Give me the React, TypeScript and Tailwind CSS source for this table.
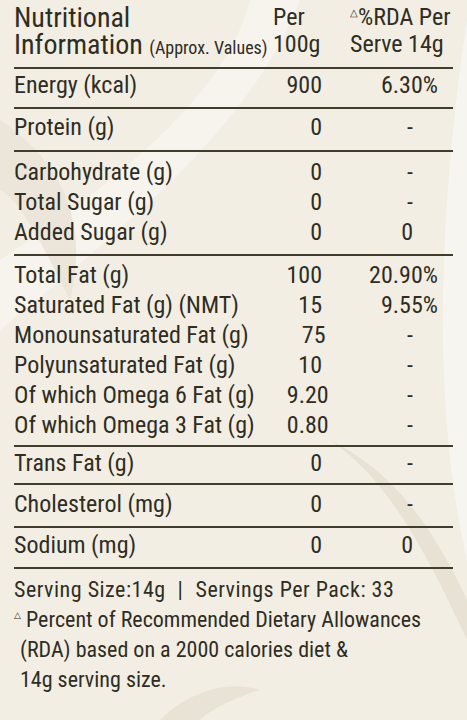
import React from "react";

type Row = { name: string; per: string; rda: string };

const fatRows: Row[] = [
  { name: "Total Fat (g)", per: "100", rda: "20.90%" },
  { name: "Saturated Fat (g) (NMT)", per: "15", rda: "9.55%" },
  { name: "Monounsaturated Fat (g)", per: "75", rda: "-" },
  { name: "Polyunsaturated Fat (g)", per: "10", rda: "-" },
  { name: "Of which Omega 6 Fat (g)", per: "9.20", rda: "-" },
  { name: "Of which Omega 3 Fat (g)", per: "0.80", rda: "-" },
];

const carbRows: Row[] = [
  { name: "Carbohydrate (g)", per: "0", rda: "-" },
  { name: "Total Sugar (g)", per: "0", rda: "-" },
  { name: "Added Sugar (g)", per: "0", rda: "0" },
];

// percentages sit flush right, dashes and zeros sit a bit further in
const Line = ({ row }: { row: Row }) => {
  const isPct = row.rda.includes("%");
  return (
    <div className="flex items-center h-[30px] pr-[15px] whitespace-nowrap">
      <span className="flex-1">{row.name}</span>
      <span className="w-[80px] text-right">{row.per}</span>
      <span className={`w-[116px] text-right ${isPct ? "" : "pr-[25px]"}`}>{row.rda}</span>
    </div>
  );
};

const Rule = () => <div className="h-[2px] bg-[#403d2c]" />;

const App = () => {
  return (
    <main className="relative w-[467px] h-[720px] overflow-hidden bg-[#f2eee4] text-[#2f2d22] text-[24px] leading-[30px] font-['Roboto_Condensed',sans-serif] font-normal">
      {/* soft leaf shapes behind the label */}
      <svg className="absolute inset-0" width="467" height="720" viewBox="0 0 467 720">
        <path d="M250 0 C230 80 150 160 0 260 L0 330 C120 230 250 130 300 0 Z" fill="#f7f4ed" />
        <path d="M0 120 C60 160 90 220 70 300 C40 240 20 200 0 190 Z" fill="#ece6da" />
        <path d="M467 20 C440 200 430 400 467 560 Z" fill="#f7f5ef" />
        <path d="M330 440 C390 480 430 560 467 640 L467 600 C430 520 390 470 330 440 Z" fill="#e8e2d5" />
        <path d="M160 720 C190 690 230 680 260 690 C230 700 210 710 200 720 Z" fill="#e9e3d6" />
      </svg>

      <div className="relative px-[14px]">
        <div className="flex h-[67px] pt-[4px] pr-[15px] leading-[27px] whitespace-nowrap">
          <div className="flex-1 min-w-0 text-[28px]">
            <div>Nutritional</div>
            <div>
              Information <span className="text-[18px]">(Approx. Values)</span>
            </div>
          </div>
          <div className="w-[80px] pl-[31px]">
            <div>Per</div>
            <div>100g</div>
          </div>
          <div className="w-[116px] pl-[28px]">
            <div>
              <span className="text-[10px] align-top leading-[18px]">△</span>%RDA Per
            </div>
            <div>Serve 14g</div>
          </div>
        </div>
        <Rule />
        <div className="pt-[1px] pb-[7px]">
          <Line row={{ name: "Energy (kcal)", per: "900", rda: "6.30%" }} />
        </div>
        <Rule />
        <div className="pt-[3px] pb-[8px]">
          <Line row={{ name: "Protein (g)", per: "0", rda: "-" }} />
        </div>
        <Rule />
        <div className="pt-[5px] pb-[7px]">
          {carbRows.map((r) => (
            <Line key={r.name} row={r} />
          ))}
        </div>
        <Rule />
        <div className="pt-[4px] pb-[5px]">
          {fatRows.map((r) => (
            <Line key={r.name} row={r} />
          ))}
        </div>
        <Rule />
        <div className="pt-[1px] pb-[5px]">
          <Line row={{ name: "Trans Fat (g)", per: "0", rda: "-" }} />
        </div>
        <Rule />
        <div className="pt-[4px] pb-[7px]">
          <Line row={{ name: "Cholesterol (mg)", per: "0", rda: "-" }} />
        </div>
        <Rule />
        <div className="pt-[2px] pb-[7px]">
          <Line row={{ name: "Sodium (mg)", per: "0", rda: "0" }} />
        </div>
        <Rule />
        <div className="pt-[6px] text-[22px] leading-[30px] whitespace-nowrap">
          <div className="tracking-[0.5px]">
            Serving Size:14g<span className="mx-[12px]">|</span>Servings Per Pack: 33
          </div>
          <div>
            <span className="text-[9px] align-top leading-[20px]">△</span> Percent of Recommended Dietary Allowances
          </div>
          <div className="pl-[6px]">(RDA) based on a 2000 calories diet &amp;</div>
          <div className="pl-[6px]">14g serving size.</div>
        </div>
      </div>
    </main>
  );
};

export default App;
